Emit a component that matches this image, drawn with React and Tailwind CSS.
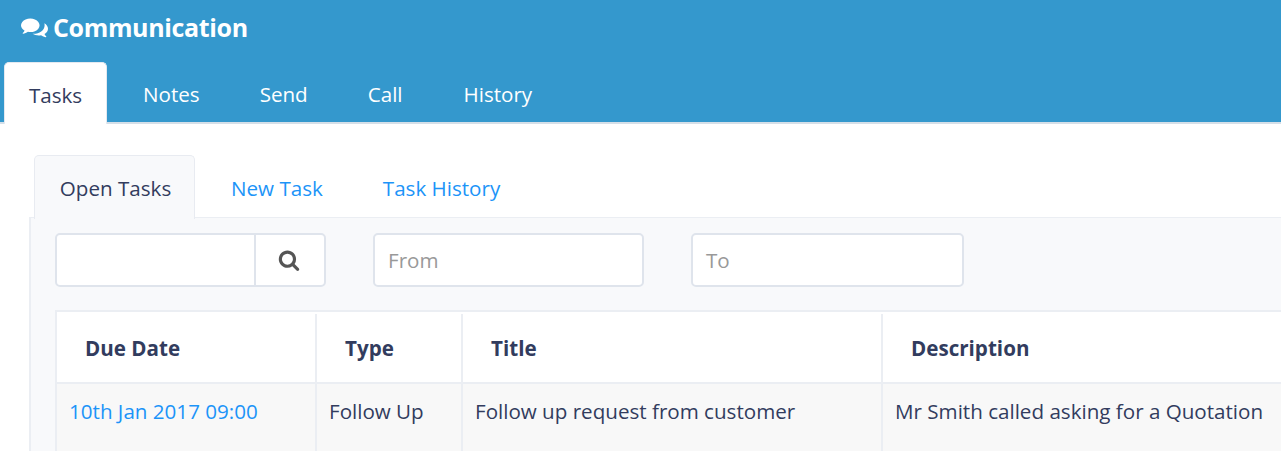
function ChatIcon() {
  return (
    <svg viewBox="0 0 2048 1792" className="w-[27px] h-[24px] fill-white">
      <path d="M1408 768q0 139-94 257t-256.500 186.500-353.500 68.500q-86 0-176-16-124 88-278 128-36 9-86 16h-3q-11 0-20.500-8t-11.500-21q-1-3-1-6.500t.5-6.500 2-6l2.500-5 3.500-5.500 4-5 4.500-5 4-4.500q5-6 23-25t26-29.500 22.500-29 25-38.500 20.500-44q-124-72-195-177t-71-224q0-139 94-257t256.500-186.500 353.500-68.500 353.500 68.500 256.500 186.500 94 257zm640 256q0 120-71 224.500t-195 176.500q10 24 20.500 44t25 38.500 22.500 29 26 29.500 23 25q1 1 4 4.500t4.500 5 4 5 3.500 5.500l2.500 5 2 6 .5 6.500-1 6.500q-3 14-13 22t-22 7q-50-7-86-16-154-40-278-128-90 16-176 16-271 0-472-132 58 4 88 4 161 0 309-45t264-129q125-92 192-212t67-254q0-77-23-152 129 71 204 178t75 230z" />
    </svg>
  );
}

function SearchIcon() {
  return (
    <svg viewBox="0 0 1792 1792" className="w-[22px] h-[22px] -ml-[2px] fill-[#555555]">
      <path d="M1216 832q0-185-131.500-316.500t-316.500-131.500-316.500 131.500-131.500 316.500 131.500 316.500 316.500 131.500 316.500-131.500 131.500-316.500zm512 832q0 52-38 90t-90 38q-54 0-90-38l-343-342q-179 124-399 124-143 0-273.500-55.500t-225-150-150-225-55.500-273.500 55.500-273.500 150-225 225-150 273.500-55.500 273.500 55.500 225 150 150 225 55.500 273.500q0 220-124 399l343 343q37 37 37 90z" />
    </svg>
  );
}

export default function App() {
  return (
    <div className="h-[451px] w-[1281px] overflow-hidden bg-white font-['Open_Sans',sans-serif] text-[20.6px] text-[#323c5e]">
      <div className="h-[124px] bg-[#3498cd] border-b-2 border-[#d5dfe8] flex flex-col">
        <div className="h-[62px] shrink-0 pl-[21px] flex items-center gap-[5px] pb-[8px]">
          <ChatIcon />
          <h1 className="text-[25px] font-bold text-white leading-none tracking-[-0.35px]">Communication</h1>
        </div>
        <div className="flex text-white shrink-0 h-[60px]">
          <div className="ml-1 mr-[6px] h-[62px] w-[103px] pt-[3px] rounded-t-[5px] bg-white border border-b-0 border-[#e4e9f0] text-[#323c5e] flex items-center justify-center">Tasks</div>
          <div className="px-[30px] h-[60px] pt-[4px] flex items-center">Notes</div>
          <div className="px-[30px] h-[60px] pt-[4px] flex items-center">Send</div>
          <div className="px-[30px] h-[60px] pt-[4px] flex items-center">Call</div>
          <div className="pl-[31px] h-[60px] pt-[4px] flex items-center">History</div>
        </div>
      </div>

      <div className="pl-[29px] pt-[31px]">
        <div className="flex h-[63px] text-[#1c94f8]">
          <div className="relative z-10 ml-[5px] mr-[6px] h-[64px] w-[161px] pt-[2px] pl-[2px] rounded-t-[5px] bg-[#f8f9fb] border border-b-0 border-[#e8ebf1] text-[#323c5e] flex items-center justify-center">Open Tasks</div>
          <div className="px-[30px] pt-[3px] flex items-center">New Task</div>
          <div className="px-[30px] pt-[3px] flex items-center">Task History</div>
        </div>

        <div className="-mt-px h-[300px] bg-[#f8f9fb] border-l-2 border-t border-[#ebeef3] pl-[24px] pt-[15px]">
          <div className="flex h-[54px]">
            <div className="flex w-[271px]">
              <div className="w-[201px] bg-white border-2 border-[#dfe4ec] rounded-l-[5px]"></div>
              <div className="w-[72px] -ml-[2px] bg-white border-2 border-[#dfe4ec] rounded-r-[5px] flex items-center justify-center">
                <SearchIcon />
              </div>
            </div>
            <div className="ml-[47px] w-[271px] bg-white border-2 border-[#dfe4ec] rounded-[5px] pl-[13px] pt-[1px] flex items-center text-[#999999]">From</div>
            <div className="ml-[47px] w-[273px] bg-white border-2 border-[#dfe4ec] rounded-[5px] pl-[13px] pt-[1px] flex items-center text-[#999999]">To</div>
          </div>

          <div className="mt-[23px] border-t-2 border-l-2 border-[#ebeef3] flex flex-col">
            <div className="flex h-[72px] pt-[2px] bg-white font-bold border-b-2 border-[#ebeef3]">
              <div className="w-[260px] pl-[28px] flex items-center border-r-2 border-[#ebeef3]">Due Date</div>
              <div className="w-[146px] pl-[28px] flex items-center border-r-2 border-[#ebeef3]">Type</div>
              <div className="w-[420px] pl-[28px] flex items-center border-r-2 border-[#ebeef3]">Title</div>
              <div className="flex-1 pl-[28px] flex items-center">Description</div>
            </div>
            <div className="flex h-[70px] bg-[#f8f8f8]">
              <div className="w-[260px] pl-[12px] pt-[12px] border-r-2 border-[#ebeef3] text-[#1c94f8]">10th Jan 2017 09:00</div>
              <div className="w-[146px] pl-[12px] pt-[12px] border-r-2 border-[#ebeef3]">Follow Up</div>
              <div className="w-[420px] pl-[12px] pt-[12px] border-r-2 border-[#ebeef3]">Follow up request from customer</div>
              <div className="flex-1 pl-[12px] pt-[12px]">Mr Smith called asking for a Quotation</div>
            </div>
          </div>
        </div>
      </div>
    </div>
  );
}
